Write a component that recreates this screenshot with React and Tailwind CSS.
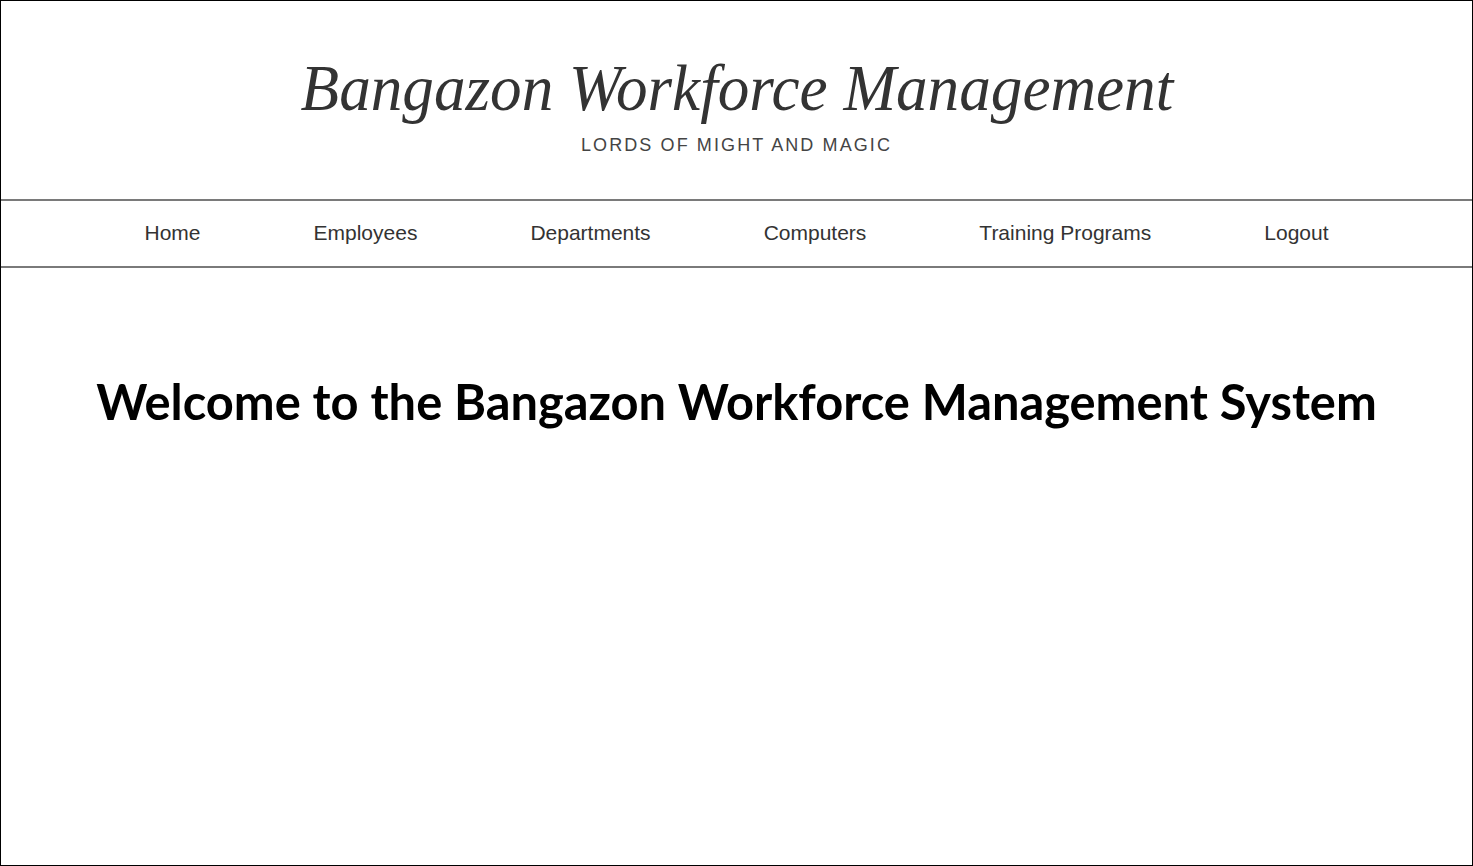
export default function App() {
  return (
    <div className="w-[1473px] h-[866px] border border-black bg-white flex flex-col overflow-hidden">
      <header className="flex flex-col items-center pt-[55px] h-[198px]">
        <h1 className="text-[65px] leading-none italic text-[#333] font-['Liberation_Serif',serif] scale-x-[0.972] whitespace-nowrap">
          Bangazon Workforce Management
        </h1>
        <p className="mt-[14px] text-[18px] leading-[20px] tracking-[2.1px] text-[#444] font-['Liberation_Sans',sans-serif]">
          LORDS OF MIGHT AND MAGIC
        </p>
      </header>
      <nav className="border-t-2 border-b-2 border-[#7a7a7a] h-[69px] pb-[2px] flex items-center justify-center gap-[113px] font-['Liberation_Sans',sans-serif] text-[21px] text-[#333]">
        <a>Home</a>
        <a>Employees</a>
        <a>Departments</a>
        <a>Computers</a>
        <a>Training Programs</a>
        <a>Logout</a>
      </nav>
      <main className="flex justify-center pt-[105px]">
        <h2 className="text-[48.8px] leading-[56px] font-bold text-black font-['Lato',sans-serif] whitespace-nowrap">
          Welcome to the Bangazon Workforce Management System
        </h2>
      </main>
    </div>
  );
}
